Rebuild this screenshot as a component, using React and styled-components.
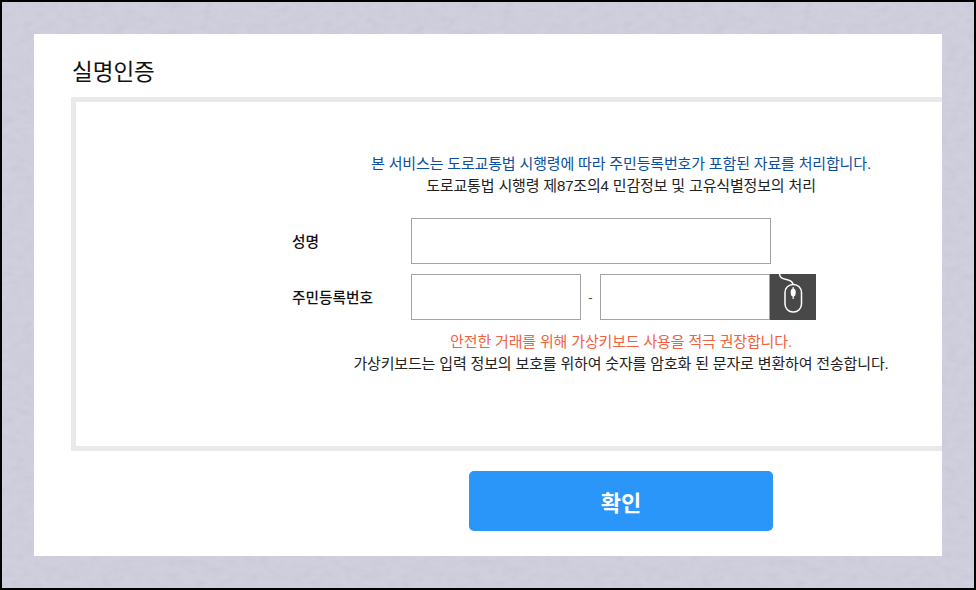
import React from "react";
import styled, { createGlobalStyle } from "styled-components";

const paper = encodeURIComponent(
  `<svg xmlns="http://www.w3.org/2000/svg" width="300" height="300"><filter id="n" x="0" y="0" width="100%" height="100%"><feTurbulence type="fractalNoise" baseFrequency="0.09 0.14" numOctaves="4" seed="4" stitchTiles="stitch"/><feColorMatrix values="0 0 0 0 0.55 0 0 0 0 0.55 0 0 0 0 0.62 0.6 0.6 0 0 -0.46"/></filter><rect width="300" height="300" fill="#cfcfde"/><rect width="300" height="300" filter="url(#n)"/></svg>`
);

const GlobalStyle = createGlobalStyle`
  html, body {
    margin: 0;
    padding: 0;
    background: #000;
  }
  * {
    box-sizing: border-box;
  }
`;

const Frame = styled.div`
  width: 976px;
  height: 590px;
  border: 2px solid #000;
  padding: 32px;
  background: #cfcfde url("data:image/svg+xml,${paper}");
  font-family: "Liberation Sans", "Noto Sans CJK KR", sans-serif;
  color: #222;
  overflow: hidden;
`;

const Card = styled.main`
  width: 908px;
  height: 522px;
  background: #fff;
  padding: 0 0 0 37px;
  overflow: hidden;
`;

const Title = styled.h1`
  margin: 0;
  height: 63px;
  padding-top: 22px;
  padding-left: 1px;
  font-size: 22.500px;
  line-height: 34px;
  font-weight: 400;
  color: #111;
`;

const Box = styled.section`
  width: 1100px;
  height: 354px;
  border: 5px solid #e9e9e9;
  padding-top: 51px;
  display: flex;
  flex-direction: column;
  align-items: center;
`;

const Notice = styled.p`
  margin: 0;
  font-size: 15px;
  letter-spacing: -0.16px;
  line-height: 22px;
  white-space: nowrap;
  color: ${(p) => p.$color || "#222"};
`;

const Form = styled.div`
  width: 658px;
  margin: 21px 0 11px;
  display: grid;
  grid-template-columns: 119px 1fr;
  row-gap: 10px;
  align-items: center;
`;

const Label = styled.label`
  font-size: 14.700px;
  font-weight: 500;
  padding-bottom: 2px;
  color: #111;
`;

const Fields = styled.div`
  display: flex;
  align-items: center;
`;

const Input = styled.input`
  display: block;
  width: ${(p) => p.$width}px;
  height: 46px;
  border: 1px solid #a3a3a3;
  border-radius: 0;
  background: #fff;
  padding: 0 10px;
`;

const Dash = styled.span`
  width: 19px;
  text-align: center;
  font-size: 13px;
  color: #444;
`;

const MouseButton = styled.button`
  width: 46px;
  height: 46px;
  padding: 0;
  border: 0;
  background: #484848;
  display: block;
`;

const Footer = styled.div`
  display: flex;
  justify-content: center;
  width: 1100px;
  padding-top: 20px;
`;

const Submit = styled.button`
  width: 304px;
  height: 60px;
  border: 0;
  border-radius: 5px;
  background: #2b96f9;
  color: #fff;
  font-family: inherit;
  font-size: 22px;
  font-weight: 700;
`;

function MouseIcon() {
  return (
    <svg width="46" height="46" viewBox="0 0 46 46" fill="none" stroke="#fff" strokeWidth="1.5">
      <path d="M9.500 0c.5 4 3 4.500 7 5.500 3.500.8 6.500 2.500 6.500 5.500" />
      <rect x="15" y="10.500" width="16.500" height="27.500" rx="8" />
      <path d="M23.200 13v12" strokeWidth="1.200" />
      <ellipse cx="23.200" cy="18.500" rx="1.800" ry="3.200" fill="#fff" />
    </svg>
  );
}

export default function App() {
  return (
    <>
      <GlobalStyle />
      <Frame>
        <Card>
          <Title>실명인증</Title>
          <Box>
            <Notice $color="#0b4ea2">본 서비스는 도로교통법 시행령에 따라 주민등록번호가 포함된 자료를 처리합니다.</Notice>
            <Notice>도로교통법 시행령 제87조의4 민감정보 및 고유식별정보의 처리</Notice>
            <Form>
              <Label>성명</Label>
              <Fields>
                <Input $width={360} />
              </Fields>
              <Label>주민등록번호</Label>
              <Fields>
                <Input $width={170} />
                <Dash>-</Dash>
                <Input $width={170} />
                <MouseButton>
                  <MouseIcon />
                </MouseButton>
              </Fields>
            </Form>
            <Notice $color="#f0623f">안전한 거래를 위해 가상키보드 사용을 적극 권장합니다.</Notice>
            <Notice>가상키보드는 입력 정보의 보호를 위하여 숫자를 암호화 된 문자로 변환하여 전송합니다.</Notice>
          </Box>
          <Footer>
            <Submit>확인</Submit>
          </Footer>
        </Card>
      </Frame>
    </>
  );
}
